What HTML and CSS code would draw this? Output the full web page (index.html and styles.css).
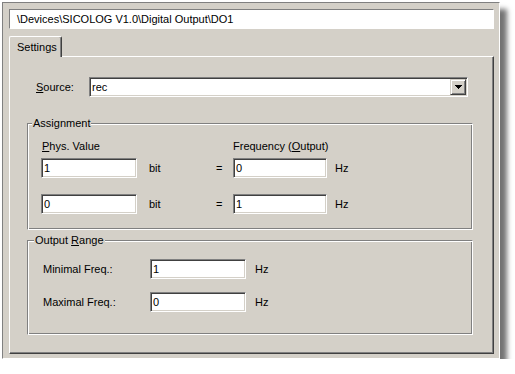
FILE: index.html
```html
<!DOCTYPE html>
<html lang="en">
<head>
    <meta charset="UTF-8">
    <title>DO1 Settings</title>
    <link rel="stylesheet" href="styles.css">
</head>
<body>
    <div class="window">
        <div class="path">\Devices\SICOLOG V1.0\Digital Output\DO1</div>
        <div class="tabs">
            <div class="tab">Settings</div>
        </div>
        <div class="panel">
            <div class="source-row">
                <span class="source-label"><u>S</u>ource:</span>
                <div class="combo">
                    <span class="combo-text">rec</span>
                    <span class="combo-btn">
                        <svg width="7" height="4" viewBox="0 0 7 4"><path d="M0 0h7v1h-1v1h-1v1h-1v1h-1v-1h-1v-1h-1v-1h-1z" fill="#000"/></svg>
                    </span>
                </div>
            </div>

            <fieldset class="group group-assign">
                <legend>Assignment</legend>
                <div class="assign-head">
                    <span class="head-phys"><u>P</u>hys. Value</span>
                    <span class="head-freq">Frequency (<u>O</u>utput)</span>
                </div>
                <div class="assign-row">
                    <input class="field" type="text" value="1">
                    <span class="unit-bit">bit</span>
                    <span class="eq">=</span>
                    <input class="field" type="text" value="0">
                    <span class="unit-hz">Hz</span>
                </div>
                <div class="assign-row second">
                    <input class="field" type="text" value="0">
                    <span class="unit-bit">bit</span>
                    <span class="eq">=</span>
                    <input class="field" type="text" value="1">
                    <span class="unit-hz">Hz</span>
                </div>
            </fieldset>

            <fieldset class="group group-range">
                <legend>Output <u>R</u>ange</legend>
                <div class="range-row">
                    <span class="range-label">Minimal Freq.:</span>
                    <input class="field" type="text" value="1">
                    <span class="range-hz">Hz</span>
                </div>
                <div class="range-row second">
                    <span class="range-label">Maximal Freq.:</span>
                    <input class="field" type="text" value="0">
                    <span class="range-hz">Hz</span>
                </div>
            </fieldset>
        </div>
    </div>
</body>
</html>
```

FILE: styles.css
```css
body {
    margin: 0;
    background: #fff;
    font-family: "Liberation Sans", Arial, sans-serif;
    font-size: 11px;
    line-height: 13px;
    color: #000;
}
.window {
    margin: 2px 0 0 2px;
    width: 498px;
    height: 357px;
    box-sizing: border-box;
    padding: 6px 5px 4px 6px;
    background: #d4d0c8;
    border: 1px solid;
    border-color: #808080 #fff #fff #808080;
    box-shadow: 7px 7px 5px rgba(0, 0, 0, 0.55);
}
.path {
    height: 20px;
    box-sizing: border-box;
    padding-left: 7px;
    line-height: 18px;
    background: #fff;
    border: 1px solid;
    border-color: #808080 #fff #fff #808080;
}
.tabs {
    display: flex;
    margin-top: 7px;
}
.tab {
    position: relative;
    z-index: 1;
    width: 53px;
    height: 21px;
    box-sizing: border-box;
    margin-bottom: -1px;
    padding: 4px 0 0 7px;
    background: #d4d0c8;
    border: 1px solid #fff;
    border-right-color: #404040;
    border-bottom: none;
    border-radius: 2px 2px 0 0;
    box-shadow: inset -1px 0 #808080;
}
.panel {
    height: 298px;
    box-sizing: border-box;
    padding: 20px 0 0 17px;
    border: 1px solid;
    border-color: #fff #404040 #404040 #fff;
    box-shadow: inset -1px -1px #808080;
}
.source-row {
    display: flex;
    align-items: center;
    margin-left: 9px;
}
.source-label {
    width: 53px;
}
.combo {
    display: flex;
    align-items: center;
    width: 379px;
    height: 20px;
    box-sizing: border-box;
    padding-left: 2px;
    background: #fff;
    border: 1px solid;
    border-color: #808080 #fff #fff #808080;
    box-shadow: inset 1px 1px #404040, inset -1px -1px #d4d0c8;
}
.combo-btn {
    display: flex;
    align-items: center;
    justify-content: center;
    width: 16px;
    height: 16px;
    box-sizing: border-box;
    margin-left: auto;
    margin-right: 1px;
    background: #d4d0c8;
    border: 1px solid;
    border-color: #d4d0c8 #404040 #404040 #d4d0c8;
    box-shadow: inset 1px 1px #fff, inset -1px -1px #808080;
}
.group {
    width: 446px;
    box-sizing: border-box;
    margin: 20px 0 0 0;
    padding: 0;
    border: 1px solid;
    border-color: #808080 #fff #fff #808080;
    box-shadow: inset 1px 1px #fff, inset -1px -1px #808080;
}
.group legend {
    margin-left: 4px;
    padding: 0 1px;
    line-height: 13px;
    background: #d4d0c8;
}
.group-range {
    margin-top: 4px;
}
.group-range legend {
    margin-left: 6px;
}
.assign-head,
.assign-row {
    display: grid;
    grid-template-columns: 96px 73px 23px 94px auto;
    align-items: center;
    margin-left: 13px;
}
.assign-head {
    margin-top: 10px;
}
.head-phys {
    grid-column: 1 / 3;
    padding-left: 1px;
}
.head-freq {
    grid-column: 4 / 6;
    white-space: nowrap;
}
.assign-row {
    margin-top: 5px;
}
.assign-row.second {
    margin-top: 16px;
    margin-bottom: 15px;
}
.unit-bit {
    padding-left: 12px;
}
.eq {
    padding-left: 6px;
}
.unit-hz {
    padding-left: 8px;
}
.range-row {
    display: grid;
    grid-template-columns: 109px 96px auto;
    align-items: center;
    margin: 12px 0 0 13px;
}
.range-row.second {
    margin-top: 13px;
    margin-bottom: 22px;
}
.range-label {
    padding-left: 2px;
}
.range-hz {
    padding-left: 9px;
}
.field {
    width: 100%;
    height: 20px;
    box-sizing: border-box;
    margin: 0;
    padding: 0 0 0 2px;
    font: inherit;
    color: #000;
    background: #fff;
    border: 1px solid;
    border-color: #808080 #fff #fff #808080;
    box-shadow: inset 1px 1px #404040, inset -1px -1px #d4d0c8;
    outline: none;
}
```
